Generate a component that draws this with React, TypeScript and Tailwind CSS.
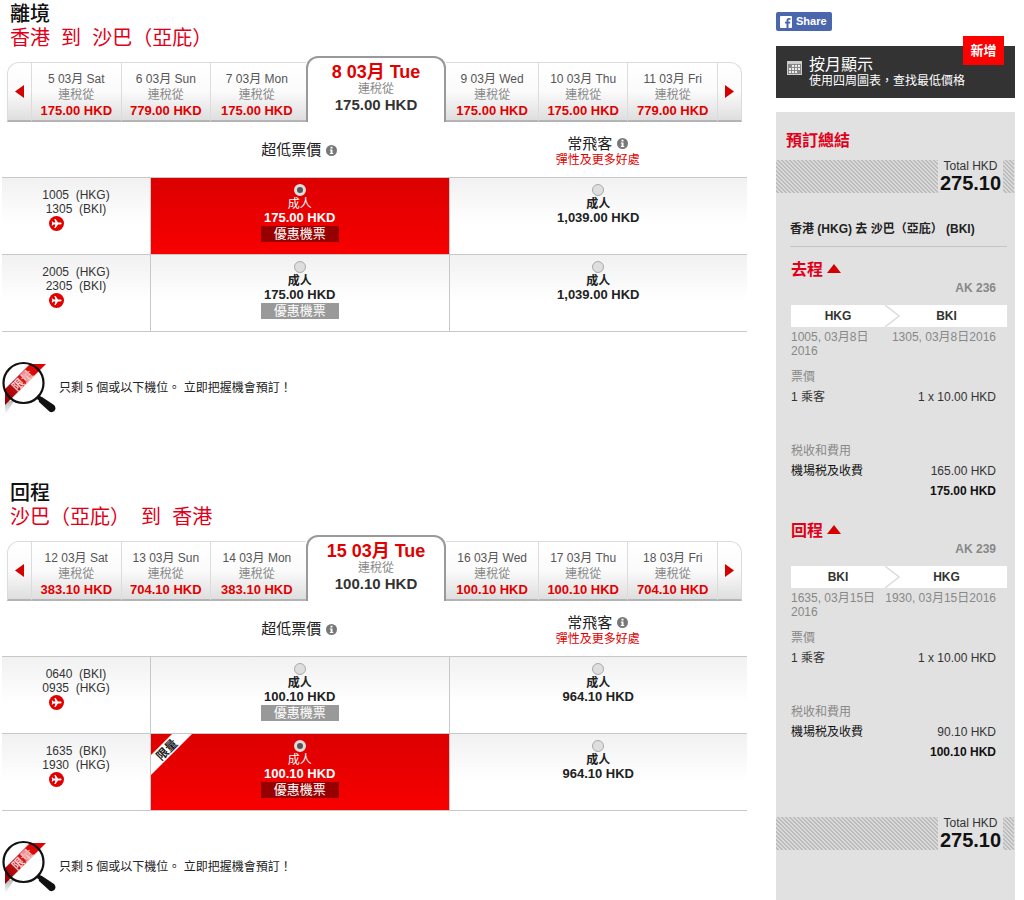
import React, { useState } from "react";

type Day = { date: string; price: string };
type Flight = {
  dep: string;
  arr: string;
  low: string;
  flex: string;
  limited?: boolean;
};
type Trip = {
  id: string;
  title: string;
  route: string;
  before: Day[];
  current: Day;
  after: Day[];
  flights: Flight[];
  selected: string;
};

const trips: Trip[] = [
  {
    id: "depart",
    title: "離境",
    route: "香港\u00a0 到\u00a0 沙巴（亞庇）",
    before: [
      { date: "5 03月 Sat", price: "175.00 HKD" },
      { date: "6 03月 Sun", price: "779.00 HKD" },
      { date: "7 03月 Mon", price: "175.00 HKD" },
    ],
    current: { date: "8 03月 Tue", price: "175.00 HKD" },
    after: [
      { date: "9 03月 Wed", price: "175.00 HKD" },
      { date: "10 03月 Thu", price: "175.00 HKD" },
      { date: "11 03月 Fri", price: "779.00 HKD" },
    ],
    flights: [
      { dep: "1005\u00a0 (HKG)", arr: "1305\u00a0 (BKI)", low: "175.00 HKD", flex: "1,039.00 HKD" },
      { dep: "2005\u00a0 (HKG)", arr: "2305\u00a0 (BKI)", low: "175.00 HKD", flex: "1,039.00 HKD" },
    ],
    selected: "low-0",
  },
  {
    id: "return",
    title: "回程",
    route: "沙巴（亞庇）\u00a0 到\u00a0 香港",
    before: [
      { date: "12 03月 Sat", price: "383.10 HKD" },
      { date: "13 03月 Sun", price: "704.10 HKD" },
      { date: "14 03月 Mon", price: "383.10 HKD" },
    ],
    current: { date: "15 03月 Tue", price: "100.10 HKD" },
    after: [
      { date: "16 03月 Wed", price: "100.10 HKD" },
      { date: "17 03月 Thu", price: "100.10 HKD" },
      { date: "18 03月 Fri", price: "704.10 HKD" },
    ],
    flights: [
      { dep: "0640\u00a0 (BKI)", arr: "0935\u00a0 (HKG)", low: "100.10 HKD", flex: "964.10 HKD" },
      { dep: "1635\u00a0 (BKI)", arr: "1930\u00a0 (HKG)", low: "100.10 HKD", flex: "964.10 HKD", limited: true },
    ],
    selected: "low-1",
  },
];

const legs = [
  {
    title: "去程",
    flight: "AK 236",
    from: "HKG",
    to: "BKI",
    dep: "1005, 03月8日 2016",
    arr: "1305, 03月8日2016",
    tax: "165.00 HKD",
    total: "175.00 HKD",
  },
  {
    title: "回程",
    flight: "AK 239",
    from: "BKI",
    to: "HKG",
    dep: "1635, 03月15日 2016",
    arr: "1930, 03月15日2016",
    tax: "90.10 HKD",
    total: "100.10 HKD",
  },
];

const tabBase =
  "border-t border-b-2 border-t-[#dcdcdc] border-b-[#b4b4b4] bg-linear-to-b from-white via-[#fbfbfb] to-[#dedede]";

function InfoIcon() {
  return (
    <svg width="11" height="11" viewBox="0 0 11 11" className="shrink-0">
      <circle cx="5.5" cy="5.5" r="5.5" fill="#777" />
      <path d="M4.5 1.8h2v1.6h-2zM3.8 4.4h2.7v3.5h.8v1.1H3.8V7.9h.8V5.5h-.8z" fill="#fff" />
    </svg>
  );
}

function PlaneIcon() {
  return (
    <svg width="15" height="15" viewBox="0 0 15 15">
      <circle cx="7.5" cy="7.5" r="7.5" fill="#e00000" />
      <path
        d="M12.6 7.5c0-.6-.6-.9-1.3-.9H9L6.6 3.1H5.4l1 3.5H4.5l-.9-1.2h-.9l.5 2.1-.5 2.1h.9l.9-1.2h1.9l-1 3.5h1.2L9 8.4h2.3c.7 0 1.3-.3 1.3-.9z"
        fill="#fff"
      />
    </svg>
  );
}

function MagnifierIcon() {
  return (
    <svg width="54" height="54" viewBox="0 0 54 54" className="shrink-0">
      <defs>
        <linearGradient id="ribbon" x1="0" y1="1" x2="1" y2="0">
          <stop offset="0" stopColor="#8c0000" />
          <stop offset="0.5" stopColor="#d81414" />
          <stop offset="1" stopColor="#e00000" />
        </linearGradient>
        <linearGradient id="shade" x1="0" y1="0" x2="0" y2="1">
          <stop offset="0" stopColor="#bbb" />
          <stop offset="1" stopColor="#fff" />
        </linearGradient>
      </defs>
      <path d="M3 40h9L3 54z" fill="url(#shade)" />
      <path d="M28 3h16L3 44V28z" fill="url(#ribbon)" />
      <circle cx="21.5" cy="22" r="20" fill="none" stroke="#111" strokeWidth="2.2" />
      <text
        x="20"
        y="24"
        fontSize="12"
        fontWeight="700"
        fill="#f6caca"
        textAnchor="middle"
        transform="rotate(-45 20 19)"
      >
        限量
      </text>
      <path d="M35 36l4 2" stroke="#111" strokeWidth="4" />
      <path d="M36 35l4 1L52 44c3 3 1 8-4 7L37 41z" fill="#111" />
    </svg>
  );
}

function DayTab({ day, className }: { day: Day; className: string }) {
  return (
    <button className={`flex basis-0 flex-col items-center pt-2 text-xs leading-4 ${tabBase} ${className}`}>
      <span className="text-[#555]">{day.date}</span>
      <span className="text-[#888]">連稅從</span>
      <span className="text-[13px] leading-[15px] font-bold text-[#e00000]">{day.price}</span>
    </button>
  );
}

function DateTabs({ trip }: { trip: Trip }) {
  return (
    <div className="mx-[5px] mt-[6px] flex items-stretch">
      <button
        aria-label="上一日"
        className={`mt-[6px] flex w-[25px] items-center justify-center rounded-tl-xl border-x border-x-[#dcdcdc] ${tabBase}`}
      >
        <svg width="9" height="13" viewBox="0 0 9 13">
          <path d="M9 0v13L0 6.5z" fill="#d40000" />
        </svg>
      </button>
      <DayTab day={trip.before[0]} className="mt-[6px] grow-[90] border-r border-r-[#dcdcdc]" />
      <DayTab day={trip.before[1]} className="mt-[6px] grow-[90] border-r border-r-[#dcdcdc]" />
      <DayTab day={trip.before[2]} className="mt-[6px] grow-[93] pr-[3px]" />
      <button className="flex h-[66px] grow-[139] basis-0 flex-col items-center rounded-t-xl border-x-2 border-t-2 border-[#999] bg-white pt-1">
        <span className="text-lg leading-5 font-bold text-[#e00000]">{trip.current.date}</span>
        <span className="text-xs leading-[15px] text-[#888]">連稅從</span>
        <span className="text-[15px] leading-4 font-bold text-[#333]">{trip.current.price}</span>
      </button>
      <DayTab day={trip.after[0]} className="mt-[6px] grow-[93] border-r border-r-[#dcdcdc]" />
      <DayTab day={trip.after[1]} className="mt-[6px] grow-[90] border-r border-r-[#dcdcdc]" />
      <DayTab day={trip.after[2]} className="mt-[6px] grow-[90]" />
      <button
        aria-label="下一日"
        className={`mt-[6px] flex w-[25px] items-center justify-center rounded-tr-xl border-x border-x-[#dcdcdc] ${tabBase}`}
      >
        <svg width="9" height="13" viewBox="0 0 9 13">
          <path d="M0 0v13L9 6.5z" fill="#d40000" />
        </svg>
      </button>
    </div>
  );
}

type FareProps = {
  name: string;
  value: string;
  price: string;
  promo?: boolean;
  limited?: boolean;
  checked: boolean;
  onSelect: (value: string) => void;
};

function FareCell({ name, value, price, promo, limited, checked, onSelect }: FareProps) {
  return (
    <td
      className={`relative border-t border-l border-[#c8c8c8] p-0 align-top ${
        checked ? "bg-linear-to-b from-[#dc0000] to-[#f80000] text-white" : "bg-linear-to-b from-[#f1f1f1] to-white to-60% text-[#222]"
      }`}
    >
      {limited && (
        <svg width="42" height="42" viewBox="0 0 42 42" className="absolute top-0 left-0">
          <path d="M21 0h20L0 41V21z" fill="#fff" />
          <text x="16" y="20" fontSize="12" fontWeight="700" fill="#222" textAnchor="middle" transform="rotate(-45 16 16)">
            限量
          </text>
        </svg>
      )}
      <label className="flex flex-col items-center pt-[6px]">
        <input
          type="radio"
          name={name}
          checked={checked}
          onChange={() => onSelect(value)}
          className="m-0 mb-px size-3 appearance-none rounded-full border border-[#aaa] bg-[#dedede] checked:border-[3px] checked:border-[#ddd] checked:bg-[#555]"
        />
        <span className={`text-xs leading-[14px] ${checked ? "" : "font-bold"}`}>成人</span>
        <span className="text-[13px] leading-[14px] font-bold">{price}</span>
        {promo && (
          <span className={`mt-px w-[78px] text-center text-[13px] leading-4 text-white ${checked ? "bg-[#960000]" : "bg-[#999]"}`}>
            優惠機票
          </span>
        )}
      </label>
    </td>
  );
}

function TripSection({ trip }: { trip: Trip }) {
  const [selected, setSelected] = useState(trip.selected);

  return (
    <section>
      <h2 className="ml-2 text-xl leading-6 font-medium text-[#111]">{trip.title}</h2>
      <h3 className="ml-2 text-xl leading-6 text-[#e0001a]">{trip.route}</h3>
      <DateTabs trip={trip} />

      <table className="w-full table-fixed border-separate border-spacing-0 border-b border-[#c8c8c8]">
        <colgroup>
          <col className="w-[148px]" />
          <col />
          <col />
        </colgroup>
        <thead>
          <tr className="h-[55px] text-[15px] text-[#222]">
            <td />
            <th className="p-0 pt-[2px] font-normal">
              <span className="flex items-center justify-center gap-[5px]">
                超低票價 <InfoIcon />
              </span>
            </th>
            <th className="p-0 pt-[2px] font-normal">
              <span className="flex items-center justify-center gap-[5px] leading-[18px]">
                常飛客 <InfoIcon />
              </span>
              <span className="block text-xs leading-[14px] text-[#e00000]">彈性及更多好處</span>
            </th>
          </tr>
        </thead>
        <tbody>
          {trip.flights.map((flight, i) => (
            <tr key={flight.dep} className="h-[77px]">
              <td className="border-t border-[#c8c8c8] bg-linear-to-b from-[#f1f1f1] to-white to-60% p-0 pt-[10px] align-top">
                <div className="flex flex-col items-center text-xs leading-[14px] text-[#333]">
                  <span>{flight.dep}</span>
                  <span>{flight.arr}</span>
                  <span className="mr-10">
                    <PlaneIcon />
                  </span>
                </div>
              </td>
              <FareCell
                name={trip.id}
                value={`low-${i}`}
                price={flight.low}
                promo
                limited={flight.limited}
                checked={selected === `low-${i}`}
                onSelect={setSelected}
              />
              <FareCell
                name={trip.id}
                value={`flex-${i}`}
                price={flight.flex}
                checked={selected === `flex-${i}`}
                onSelect={setSelected}
              />
            </tr>
          ))}
        </tbody>
      </table>

      <div className="mt-[29px] flex items-center gap-[3px] text-xs text-[#222]">
        <MagnifierIcon />
        <p>只剩 5 個或以下機位。 立即把握機會預訂！</p>
      </div>
    </section>
  );
}

function TotalBar() {
  return (
    <div className="mr-px flex justify-end bg-[linear-gradient(45deg,#bcbcbc_25%,#dadada_25%_50%,#bcbcbc_50%_75%,#dadada_75%)] bg-size-[4px_4px] pr-[11px]">
      <div className="w-[65px] bg-[#e1e1e1] text-center">
        <p className="text-xs leading-[13px] text-[#333]">Total HKD</p>
        <p className="text-xl leading-5 font-bold text-[#111]">275.10</p>
      </div>
    </div>
  );
}

function LegSummary({ leg }: { leg: (typeof legs)[number] }) {
  return (
    <div className="mr-2 ml-[15px] pb-[19px] text-xs leading-5 text-[#333]">
      <h3 className="flex items-center gap-1 text-base leading-[22px] font-bold text-[#e0001a]">
        {leg.title}
        <svg width="14" height="9" viewBox="0 0 14 9" className="mb-1">
          <path d="M7 0l7 9H0z" fill="#d40000" />
        </svg>
      </h3>
      <p className="mr-[11px] text-right leading-[14px] font-bold text-[#888]">{leg.flight}</p>
      <div className="mt-[10px] flex h-[22px] items-stretch bg-white font-bold">
        <span className="w-[94px] text-center leading-[22px]">{leg.from}</span>
        <svg width="15" height="22" viewBox="0 0 15 22" fill="none">
          <path d="M0 0l14 11L0 22" stroke="#ddd" strokeWidth="1.5" />
        </svg>
        <span className="flex-1 pr-[14px] text-center leading-[22px]">{leg.to}</span>
      </div>
      <div className="mt-[3px] mr-[11px] flex justify-between leading-[14px] text-[#888]">
        <span className="w-[88px]">{leg.dep}</span>
        <span className="whitespace-nowrap">{leg.arr}</span>
      </div>
      <p className="mt-[9px] text-[#888]">票價</p>
      <div className="mr-[11px] flex justify-between">
        <span>1 乘客</span>
        <span>1 x 10.00 HKD</span>
      </div>
      <p className="mt-[34px] text-[#888]">税收和費用</p>
      <div className="mr-[11px] flex justify-between">
        <span className="text-[#111]">機場税及收費</span>
        <span>{leg.tax}</span>
      </div>
      <p className="mr-[11px] text-right font-bold text-[#111]">{leg.total}</p>
    </div>
  );
}

function Sidebar() {
  return (
    <aside className="flex w-[239px] shrink-0 flex-col">
      <button className="mt-3 flex h-[19px] w-14 items-center gap-1 rounded-[2px] bg-[#4a67ad] pl-1 text-[11px] font-bold text-white">
        <svg width="12" height="12" viewBox="0 0 12 12">
          <rect width="12" height="12" rx="1" fill="#fff" />
          <path d="M6.5 12V7.500H5V5.700h1.500V4.500C6.500 2.900 7.400 2 8.900 2H10.500v1.700H9.400c-.7 0-.9.300-.9.900v1.100h1.900l-.3 1.800H8.500V12z" fill="#4a67ad" />
        </svg>
        Share
      </button>

      <a href="#calendar" className="relative mt-[15px] flex h-[52px] items-start gap-[7px] bg-[#333] pt-[10px] pl-[11px] text-white">
        <svg width="15" height="14" viewBox="0 0 15 14" className="mt-[5px]">
          <rect width="15" height="14" fill="#ccc" />
          <path d="M1 3h13v10H1z" fill="#888" />
          <path d="M5 4h2v2H5zM8 4h2v2H8zM11 4h2v2h-2zM2 7h2v2H2zM5 7h2v2H5zM8 7h2v2H8zM11 7h2v2h-2zM2 10h2v2H2zM5 10h2v2H5zM8 10h2v2H8z" fill="#eee" />
        </svg>
        <span>
          <span className="block text-base leading-[18px]">按月顯示</span>
          <span className="block text-xs leading-[14px]">使用四周圖表，查找最低價格</span>
        </span>
        <span className="absolute -top-[10px] right-[11px] w-[41px] bg-[#ff0000] text-center text-[13px] leading-[29px] font-bold">新增</span>
      </a>

      <div className="mt-[14px] flex-1 bg-[#e1e1e1] pb-6">
        <h2 className="pt-[18px] pb-[8px] pl-[10px] text-base leading-[22px] font-bold text-[#e0001a]">預訂總結</h2>
        <TotalBar />
        <p className="mt-[26px] mr-2 mb-3 ml-[14px] border-b border-[#c4c4c4] pb-[7px] text-xs leading-5 font-bold whitespace-nowrap text-[#222]">
          香港 (HKG) 去 沙巴（亞庇） (BKI)
        </p>
        {legs.map((leg) => (
          <LegSummary key={leg.flight} leg={leg} />
        ))}
        <div className="mt-9">
          <TotalBar />
        </div>
      </div>
    </aside>
  );
}

export default function App() {
  return (
    <div className="flex min-h-screen items-stretch gap-[29px] bg-white pr-[9px] pl-[2px] font-['Liberation_Sans','Noto_Sans_CJK_TC',sans-serif]">
      <main className="flex h-fit min-w-0 flex-1 flex-col gap-[66px] pt-[2px]">
        {trips.map((trip) => (
          <TripSection key={trip.id} trip={trip} />
        ))}
      </main>
      <Sidebar />
    </div>
  );
}
